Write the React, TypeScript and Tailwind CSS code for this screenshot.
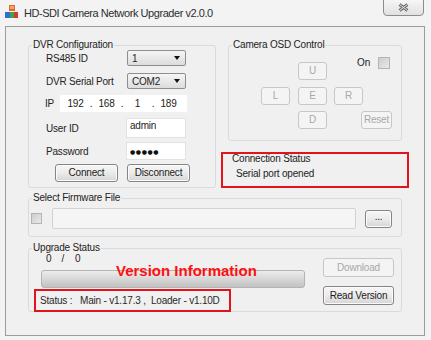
import React from "react";

type Kids = { children?: React.ReactNode; className?: string };

function Btn({ children, disabled, className = "" }: Kids & { disabled?: boolean }) {
  return (
    <div
      className={`flex items-center justify-center rounded-[3px] border leading-none ${
        disabled
          ? "border-[#c4c8cb] bg-[#f4f4f4] text-[#a8a8a8]"
          : "border-[#858585] bg-gradient-to-b from-[#f7f7f7] via-[#ebebeb] to-[#d5d5d5] text-[#1b1b1b] shadow-[inset_0_0_0_1px_#fbfbfb]"
      } ${className}`}
    >
      {children}
    </div>
  );
}

function Combo({ value }: { value: string }) {
  return (
    <div className="flex h-[16px] w-[59px] items-center justify-between rounded-[2px] border border-[#8e8e8e] bg-gradient-to-b from-[#f5f5f5] to-[#dcdcdc] pl-[4px] pr-[5px]">
      <span>{value}</span>
      <svg width="6" height="4" viewBox="0 0 6 4">
        <path d="M0 0h6L3 4z" fill="#111" />
      </svg>
    </div>
  );
}

function Check({ className = "" }: { className?: string }) {
  return (
    <div className={`border border-[#b4b4b4] bg-gradient-to-br from-[#cdcdcd] to-[#e9e9e9] ${className}`} />
  );
}

function Group({ title, className = "", children }: Kids & { title: string }) {
  return (
    <fieldset className={`rounded-[3px] border border-[#d6dbdf] ${className}`}>
      <legend className="ml-[3px] px-[1px] leading-[10px]">{title}</legend>
      {children}
    </fieldset>
  );
}

export default function App() {
  return (
    <div className="h-[340px] w-[431px] overflow-hidden bg-[#f3f3f3] font-['Liberation_Sans',Arial,sans-serif] text-[10px] tracking-[-0.2px] text-[#232323]">
      {/* title bar */}
      <div className="flex h-[26px]">
        <svg className="ml-[5px] mt-[5px]" width="13" height="13" viewBox="0 0 13 13">
          <rect x="4" y="0" width="6" height="6" fill="#e8682a" />
          <rect x="5" y="1" width="4" height="3" fill="#f2a25a" />
          <rect x="0" y="7" width="5" height="6" fill="#2f6fd0" />
          <rect x="5" y="7" width="4" height="6" fill="#3aa64a" />
          <rect x="9" y="7" width="4" height="6" fill="#d63a2e" />
        </svg>
        <span className="ml-[6px] mt-[6px] text-[11px] leading-[14px] tracking-[-0.45px] text-[#2e2e2e]">
          HD-SDI Camera Network Upgrader v2.0.0
        </span>
        <div className="ml-auto mr-[7px] -mt-[1px] flex h-[17px] w-[41px] items-center justify-center rounded-b-[4px] border border-[#8c8c8c] bg-gradient-to-b from-[#f6f6f6] to-[#e1e1e1]">
          <svg width="11" height="9" viewBox="0 0 11 9">
            <path d="M1.5 1.5l8 6M9.5 1.5l-8 6" stroke="#6a6a6a" strokeWidth="3" />
            <path d="M1.5 1.5l8 6M9.5 1.5l-8 6" stroke="#ececec" strokeWidth="1" />
          </svg>
        </div>
      </div>

      {/* client area */}
      <div className="ml-[5px] h-[310px] w-[420px] border border-[#9c9c9c] bg-[#f0f0f0]">
        <div className="mt-[13px] flex">
          <Group title="DVR Configuration" className="ml-[22px] h-[148px] w-[188px]">
            <div className="flex h-[16px] items-center">
              <span className="ml-[17px] w-[81px]">RS485 ID</span>
              <Combo value="1" />
            </div>
            <div className="mt-[7px] flex h-[16px] items-center">
              <span className="ml-[17px] w-[81px]">DVR Serial Port</span>
              <Combo value="COM2" />
            </div>
            <div className="mt-[6px] flex h-[17px] items-center">
              <span className="ml-[16px] w-[15px]">IP</span>
              <div className="flex h-[17px] w-[127px] items-center bg-white pl-[4px]">
                <span className="w-[23px] text-center">192</span>
                <span className="w-[8px] text-center">.</span>
                <span className="w-[23px] text-center">168</span>
                <span className="w-[8px] text-center">.</span>
                <span className="w-[23px] text-center">1</span>
                <span className="w-[8px] text-center">.</span>
                <span className="w-[23px] text-center">189</span>
              </div>
            </div>
            <div className="mt-[6px] flex h-[20px] items-center">
              <span className="ml-[17px] w-[80px]">User ID</span>
              <div className="h-[20px] w-[60px] border border-[#e2e2e2] bg-white pl-[3px] pt-[1px] leading-[12px]">admin</div>
            </div>
            <div className="mt-[4px] flex h-[18px] items-center">
              <span className="ml-[17px] w-[80px]">Password</span>
              <div className="flex h-[18px] w-[60px] items-center border border-[#e2e2e2] bg-white pl-[3px] font-['DejaVu_Sans',sans-serif] text-[6px] tracking-[0.6px] text-[#111]">
                ●●●●●
              </div>
            </div>
            <div className="mt-[4px] flex h-[18px]">
              <Btn className="ml-[26px] w-[63px]">Connect</Btn>
              <Btn className="ml-[9px] w-[63px]">Disconnect</Btn>
            </div>
          </Group>

          <div className="ml-[5px] flex flex-col">
            <Group title="Camera OSD Control" className="ml-[7px] h-[101px] w-[174px]">
              <div className="flex h-[30px] items-start">
                <Btn disabled className="ml-[69px] mt-[12px] h-[18px] w-[29px]">U</Btn>
                <div className="ml-auto mr-[11px] mt-[5px] flex items-center">
                  <span>On</span>
                  <Check className="ml-[8px] h-[12px] w-[12px]" />
                </div>
              </div>
              <div className="mt-[7px] flex h-[18px]">
                <Btn disabled className="ml-[32px] w-[29px]">L</Btn>
                <Btn disabled className="ml-[8px] w-[29px]">E</Btn>
                <Btn disabled className="ml-[7px] w-[29px]">R</Btn>
              </div>
              <div className="mt-[6px] flex h-[18px]">
                <Btn disabled className="ml-[69px] w-[29px]">D</Btn>
                <Btn disabled className="ml-[34px] w-[31px]">Reset</Btn>
              </div>
            </Group>
            <div className="mt-[11px] h-[36px] w-[188px] border-2 border-[#e3131b] pl-[9px]">
              <div className="leading-[10px]">Connection Status</div>
              <div className="ml-[4px] mt-[4px] leading-[12px]">Serial port opened</div>
            </div>
          </div>
        </div>

        <Group title="Select Firmware File" className="ml-[22px] mt-[5px] h-[44px] w-[374px]">
          <div className="mt-[5px] flex h-[21px] items-center">
            <Check className="ml-[2px] h-[11px] w-[11px]" />
            <div className="ml-[10px] h-[21px] w-[304px] rounded-[2px] border border-[#d3d3d3] bg-[#f5f5f5]" />
            <Btn className="ml-[9px] h-[18px] w-[27px] pb-[3px]">...</Btn>
          </div>
        </Group>

        <Group title="Upgrade Status" className="ml-[22px] mt-[6px] h-[69px] w-[374px]">
          <div className="flex">
            <div className="relative w-[277px]">
              <div className="ml-[17px] flex h-[11px] items-center gap-[10px] leading-[11px]">
                <span>0</span>
                <span>/</span>
                <span className="ml-[1px]">0</span>
              </div>
              <div className="ml-[12px] mt-[6px] h-[18px] w-[264px] rounded-[3px] border border-[#b3b3b3] bg-gradient-to-b from-[#ececec] via-[#d7d7d7] to-[#c2c2c2]" />
              <div className="ml-[5px] mt-[1px] flex h-[23px] w-[197px] items-center whitespace-pre border-2 border-[#e3131b] pl-[4px] text-[#2a2a2a]">
                {"Status :   Main - v1.17.3 ,  Loader - v1.10D"}
              </div>
              <span className="absolute left-[87px] top-[9px] text-[15px] font-bold leading-[18px] tracking-normal text-[#ff1010]">
                Version Information
              </span>
            </div>
            <div className="ml-[17px] flex flex-col">
              <Btn disabled className="mt-[5px] h-[19px] w-[71px]">Download</Btn>
              <Btn className="mt-[9px] h-[19px] w-[71px]">Read Version</Btn>
            </div>
          </div>
        </Group>
      </div>
    </div>
  );
}
